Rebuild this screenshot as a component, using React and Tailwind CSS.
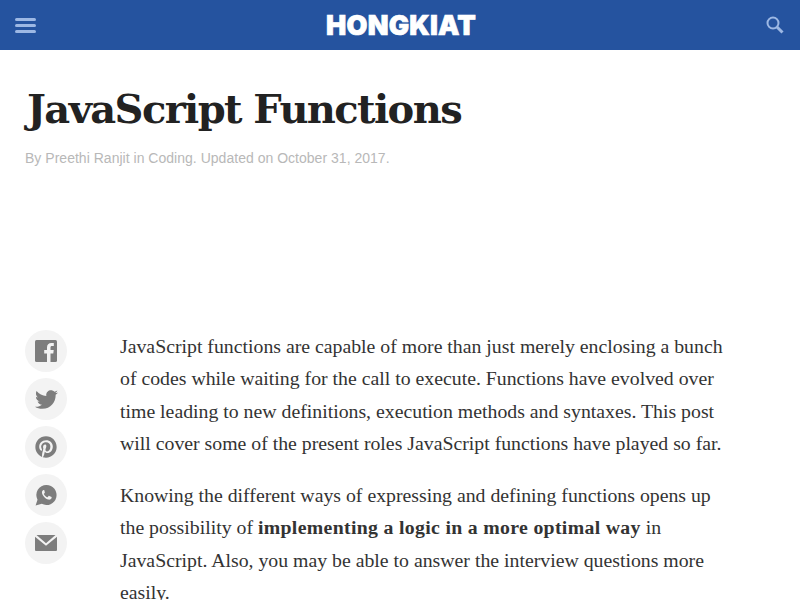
import { FaTwitter, FaPinterest } from 'react-icons/fa';

const FacebookIcon = () => (
  <svg width="22" height="22" viewBox="0 0 22 22" aria-hidden="true">
    <rect width="22" height="22" rx="1.5" fill="currentColor" />
    <path d="M12 22v-8.5H9.2V10H12V7.5C12 4.6 13.7 3 16.3 3c1.2 0 2.2.1 2.5.1v3h-1.7c-1.4 0-1.6.7-1.6 1.6V10h3.2l-.4 3.5h-2.8V22z" fill="#f3f3f3" />
  </svg>
);

const WhatsappIcon = () => (
  <svg width="22" height="22" viewBox="0 0 22 22" aria-hidden="true">
    <path d="M11.5 1a10 10 0 1 1-4.7 18.8L.6 21.5l1.9-5.8A10 10 0 0 1 11.5 1z" fill="currentColor" />
    <path d="M8.4 6c-.9.4-1.6 1.5-1.4 2.9.4 2.7 3.500 6 6.400 6.700 1.500.3 2.700-.4 3.100-1.400.2-.5.2-1 .1-1.100l-2.300-1.200c-.3-.1-.5 0-.7.2l-.8 1c-.2.2-.4.2-.6.100-1.400-.6-2.500-1.700-3.200-3-.1-.2-.1-.4.1-.6l.6-.7c.2-.2.2-.4.1-.6L9.300 6.200C9.100 5.900 8.800 5.900 8.400 6z" fill="#f3f3f3" />
  </svg>
);

const MailIcon = () => (
  <svg width="22" height="16" viewBox="0 0 22 16" aria-hidden="true" fill="currentColor">
    <path d="M0 1.800 11 10.800 22 1.800V15a1 1 0 0 1-1 1H1a1 1 0 0 1-1-1z" />
    <path d="M1.500 0h19L11 8.200z" />
  </svg>
);

const SHARE = [
  { name: 'Facebook', icon: <FacebookIcon /> },
  { name: 'Twitter', icon: <FaTwitter size={23} /> },
  { name: 'Pinterest', icon: <FaPinterest size={22} /> },
  { name: 'WhatsApp', icon: <WhatsappIcon /> },
  { name: 'Email', icon: <MailIcon /> },
];

function Header() {
  return (
    <header className="h-[50px] bg-[#25539f] flex items-center justify-between pl-[15px] pr-[16px]">
      <div className="w-[21px] flex flex-col gap-[3px]">
        <span className="h-[3px] rounded-sm bg-[#9db8e4]" />
        <span className="h-[3px] rounded-sm bg-[#9db8e4]" />
        <span className="h-[3px] rounded-sm bg-[#9db8e4]" />
      </div>
      <div className="font-['Inter',sans-serif] font-black text-[27px] leading-none text-white tracking-[0.2px] [-webkit-text-stroke:0.7px_white]">HONGKIAT</div>
      <svg width="18" height="18" viewBox="0 0 18 18" fill="none" stroke="#9db8e4" aria-label="Search">
        <circle cx="7" cy="7" r="5.5" strokeWidth="2" />
        <path d="M11 11l5.500 5.500" strokeWidth="3" />
      </svg>
    </header>
  );
}

export default function App() {
  return (
    <div className="h-[600px] overflow-hidden bg-white">
      <Header />
      <main className="px-[25px]">
        <h1 className="pt-[33px] pl-[2px] font-['DejaVu_Serif',serif] font-bold text-[40px] leading-[52px] text-[#222222] tracking-[-1.6px]">JavaScript Functions</h1>
        <p className="mt-[13px] font-['Liberation_Sans',sans-serif] text-sm leading-[20px] tracking-[0.02px] text-[#b8b8b8]">By Preethi Ranjit in Coding. Updated on October 31, 2017.</p>

        <div className="mt-[162px] flex">
          <ul className="w-[95px] shrink-0 flex flex-col gap-[6px]">
            {SHARE.map(({ name, icon }) => (
              <li key={name} className="w-[42px] h-[42px] rounded-full bg-[#f3f3f3] flex items-center justify-center text-[#7d7d7d]" aria-label={name}>
                {icon}
              </li>
            ))}
          </ul>
          <article className="font-['Liberation_Serif',serif] text-[19.8px] leading-[32.3px] text-[#333333] whitespace-nowrap">
            <p>
              JavaScript functions are capable of more than just merely enclosing a bunch<br />
              of codes while waiting for the call to execute. Functions have evolved over<br />
              time leading to new definitions, execution methods and syntaxes. This post<br />
              will cover some of the present roles JavaScript functions have played so far.
            </p>
            <p className="mt-[20px]">
              Knowing the different ways of expressing and defining functions opens up<br />
              the possibility of <strong className="tracking-[0.32px]">implementing a logic in a more optimal way</strong> in<br />
              JavaScript. Also, you may be able to answer the interview questions more<br />
              easily.
            </p>
          </article>
        </div>
      </main>
    </div>
  );
}
